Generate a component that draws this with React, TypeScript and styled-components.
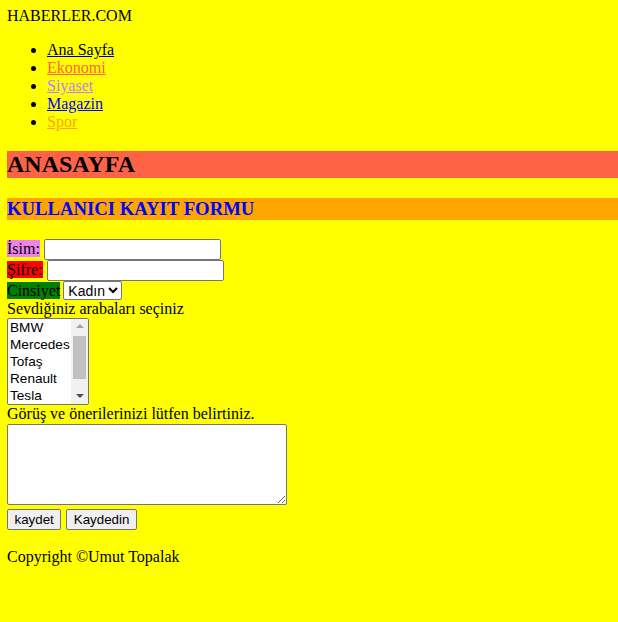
import React from "react";
import styled, { createGlobalStyle } from "styled-components";

const Global = createGlobalStyle`
  body {
    margin: 7px 0 8px 7px;
    background: #ffff00;
    font-family: "Liberation Serif", "Times New Roman", serif;
    font-size: 16px;
    color: #000;
  }
`;

const Brand = styled.div``;

const Menu = styled.ul`
  margin: 16px 0;
  padding-left: 40px;
  list-style: disc;
`;

const MenuLink = styled.a<{ $color: string }>`
  color: ${(p) => p.$color};
  text-decoration: underline;
`;

const Section = styled.section``;

const PageTitle = styled.h1`
  font-size: 24px;
  margin: 19.92px 0;
  font-weight: bold;
  background: #ff6347;
`;

const FormTitle = styled.h2`
  font-size: 18.72px;
  margin: 18.72px 0;
  font-weight: bold;
  background: #ffa500;
  color: #0000ff;
`;

const Form = styled.form``;

const Label = styled.label<{ $bg: string }>`
  background: ${(p) => p.$bg};
`;

const TextInput = styled.input`
  font-family: "Liberation Sans", Arial, sans-serif;
  font-size: 13.333px;
  width: 177px;
  height: 21px;
  box-sizing: border-box;
  border: 1px solid #767676;
  border-radius: 2px;
  padding: 1px 2px;
  margin: 0 0 0 4px;
  background: #fff;
`;

const Dropdown = styled.select`
  font-family: "Liberation Sans", Arial, sans-serif;
  font-size: 14px;
  height: 19px;
  width: 59px;
  box-sizing: border-box;
  border: 1px solid #767676;
  border-radius: 2px;
  margin: 0 0 0 3px;
  background: #fff;
  color: #000;
`;

const ListBox = styled.div`
  display: inline-flex;
  width: 82px;
  height: 87px;
  box-sizing: border-box;
  border: 1px solid #767676;
  border-radius: 2px;
  background: #fff;
  font-family: "Liberation Sans", Arial, sans-serif;
  font-size: 13.6px;
  vertical-align: bottom;
  overflow: hidden;
`;

const OptionList = styled.div`
  flex: 1;
  overflow: hidden;
`;

const OptionItem = styled.div`
  height: 17px;
  line-height: 17px;
  padding: 0 2px;
  white-space: nowrap;
`;

const Scrollbar = styled.div`
  width: 17px;
  display: flex;
  flex-direction: column;
  background: #f1f1f1;
`;

const ArrowBox = styled.div`
  height: 15px;
  display: flex;
  align-items: center;
  justify-content: center;
`;

const Triangle = styled.div<{ $up: boolean; $color: string }>`
  width: 0;
  height: 0;
  border-left: 4px solid transparent;
  border-right: 4px solid transparent;
  ${(p) =>
    p.$up
      ? `border-bottom: 4px solid ${p.$color};`
      : `border-top: 4px solid ${p.$color};`}
`;

const Track = styled.div`
  flex: 1;
  padding: 2px 2px 0 2px;
`;

const Thumb = styled.div`
  height: 43px;
  background: #c1c1c1;
`;

const TextArea = styled.textarea`
  width: 280px;
  height: 81px;
  box-sizing: border-box;
  border: 1px solid #767676;
  border-radius: 2px;
  margin: 1px 0 0 0;
  background: #fff;
  vertical-align: bottom;
`;

const ButtonRow = styled.div`
  display: flex;
  gap: 5px;
  margin-top: 4px;
`;

const Button = styled.button`
  font-family: "Liberation Sans", Arial, sans-serif;
  font-size: 13.333px;
  height: 21px;
  padding: 1px 6.5px;
  border: 1px solid #767676;
  border-radius: 2px;
  background: #efefef;
  color: #000;
  margin: 0;
`;

const Footer = styled.p`
  margin: 18px 0 16px 0;
`;

const links = [
  { text: "Ana Sayfa", color: "#000000" },
  { text: "Ekonomi", color: "#ff6347" },
  { text: "Siyaset", color: "#bb80ff" },
  { text: "Magazin", color: "#0000ff" },
  { text: "Spor", color: "#ffa500" },
];

const cars = ["BMW", "Mercedes", "Tofaş", "Renault", "Tesla"];

export default function App() {
  return (
    <>
      <Global />
      <Brand>HABERLER.COM</Brand>
      <Menu>
        {links.map((l) => (
          <li key={l.text}>
            <MenuLink href="#" $color={l.color}>
              {l.text}
            </MenuLink>
          </li>
        ))}
      </Menu>
      <Section>
        <PageTitle>ANASAYFA</PageTitle>
        <FormTitle>KULLANICI KAYIT FORMU</FormTitle>
        <Form onSubmit={(e) => e.preventDefault()}>
          <Label $bg="#ee82ee">İsim:</Label>
          <TextInput type="text" />
          <br />
          <Label $bg="#ff0000">Şifre:</Label>
          <TextInput type="password" />
          <br />
          <Label $bg="#008000">Cinsiyet</Label>
          <Dropdown defaultValue="Kadın">
            <option>Kadın</option>
            <option>Erkek</option>
          </Dropdown>
          <br />
          Sevdiğiniz arabaları seçiniz
          <br />
          <ListBox role="listbox" aria-multiselectable="true">
            <OptionList>
              {cars.map((c) => (
                <OptionItem key={c} role="option">
                  {c}
                </OptionItem>
              ))}
            </OptionList>
            <Scrollbar>
              <ArrowBox>
                <Triangle $up={true} $color="#a3a3a3" />
              </ArrowBox>
              <Track>
                <Thumb />
              </Track>
              <ArrowBox>
                <Triangle $up={false} $color="#505050" />
              </ArrowBox>
            </Scrollbar>
          </ListBox>
          <br />
          Görüş ve önerilerinizi lütfen belirtiniz.
          <br />
          <TextArea />
          <ButtonRow>
            <Button type="submit">kaydet</Button>
            <Button type="button">Kaydedin</Button>
          </ButtonRow>
        </Form>
      </Section>
      <Footer>Copyright ©Umut Topalak</Footer>
    </>
  );
}
